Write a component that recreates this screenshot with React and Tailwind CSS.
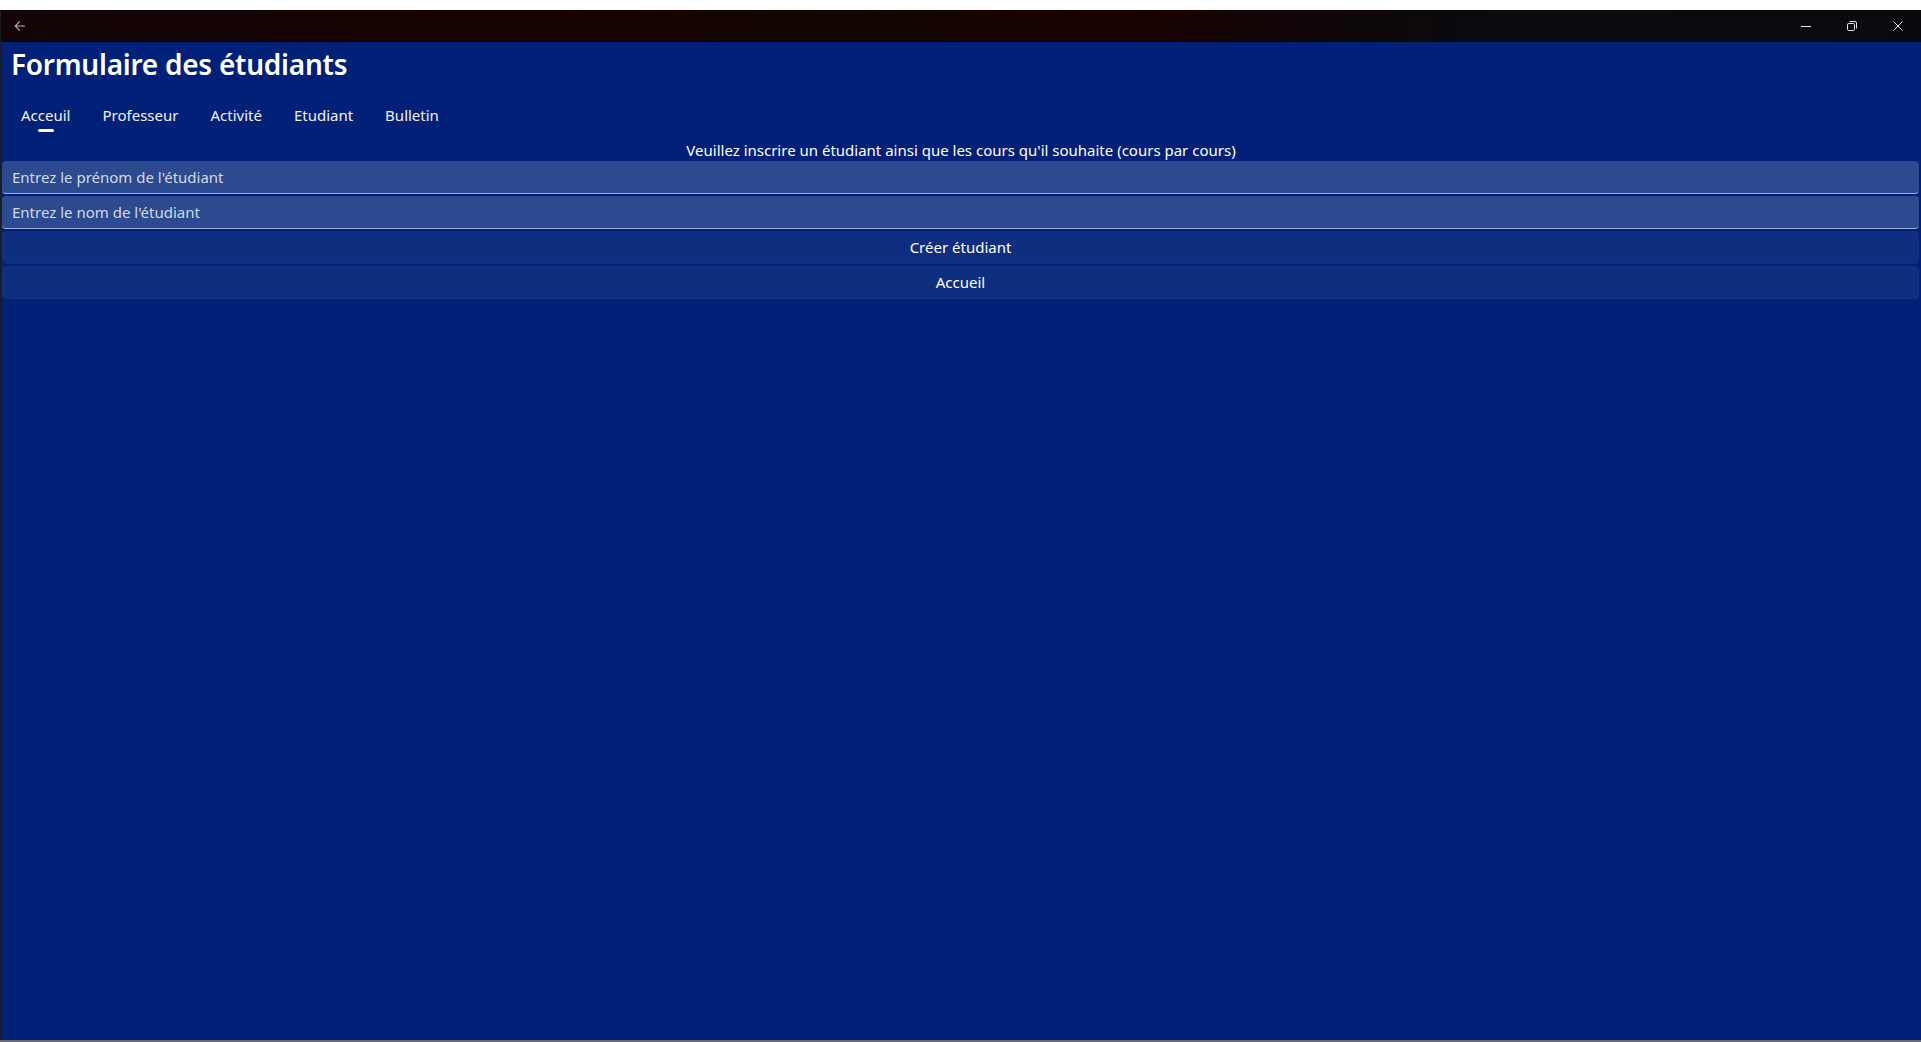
import React from "react";

const font = { fontFamily: '"Noto Sans", "Open Sans", sans-serif' };

function TitleBar() {
  return (
    <div className="h-[32px] flex items-center justify-between bg-[linear-gradient(90deg,#130407_0%,#170300_30%,#120600_45%,#1a0200_58%,#100608_68%,#0a0a0f_78%,#0a0a0e_100%)]">
      <div className="w-[36px] flex justify-center pl-[2px]">
        <svg width="12" height="12" viewBox="0 0 12 12" fill="none" stroke="#b9b4b6" strokeWidth="1.1">
          <path d="M11 6H1.2M5.8 1.4L1.2 6l4.6 4.6" />
        </svg>
      </div>
      <div className="flex items-center h-full">
        <div className="w-[46px] h-full flex items-center justify-center">
          <svg width="12" height="12" viewBox="0 0 12 12" fill="none" stroke="#e6e6e6" strokeWidth="1">
            <path d="M1 6.5h10" />
          </svg>
        </div>
        <div className="w-[46px] h-full flex items-center justify-center">
          <svg width="12" height="12" viewBox="0 0 12 12" fill="none" stroke="#e6e6e6" strokeWidth="1">
            <rect x="1.5" y="3.5" width="7" height="7" rx="1.2" />
            <path d="M3.5 1.5h5.5a1.5 1.5 0 0 1 1.5 1.5v5.5" />
          </svg>
        </div>
        <div className="w-[46px] h-full flex items-center justify-center">
          <svg width="12" height="12" viewBox="0 0 12 12" fill="none" stroke="#e6e6e6" strokeWidth="1">
            <path d="M1.5 1.5l9 9M10.5 1.5l-9 9" />
          </svg>
        </div>
      </div>
    </div>
  );
}

const tabs = ["Acceuil", "Professeur", "Activité", "Etudiant", "Bulletin"];

export default function App() {
  return (
    <div className="w-full h-[1042px] flex flex-col bg-white overflow-hidden" style={font}>
      <div className="h-[10px] bg-white" />
      <div className="flex-1 flex flex-col border-l border-[#1b1b22]">
        <TitleBar />
        <div className="flex-1 flex flex-col bg-[#012077] text-white">
          <h1 className="pl-[10px] pt-[4px] h-[50px] text-[28px] leading-[36px] font-semibold tracking-[-0.25px]">
            Formulaire des étudiants
          </h1>
          <div className="flex pl-[20px] gap-[32px] h-[48px] text-[15px]">
            {tabs.map((t, i) => (
              <div key={t} className="relative flex flex-col items-center pt-[13px]">
                <span className="leading-[20px] text-[#f0f2f8]">{t}</span>
                {i === 0 && (
                  <span className="mt-[4px] w-[16px] h-[3px] rounded-full bg-white" />
                )}
              </div>
            ))}
          </div>
          <div className="text-center text-[15px] leading-[21px] h-[21px] text-white">
            Veuillez inscrire un étudiant ainsi que les cours qu'il souhaite (cours par cours)
          </div>
          <div className="flex flex-col gap-[2px] pl-[1px] pr-[2px]">
            <div className="h-[33px] rounded-[4px] bg-[#2b4a90] border-b border-[#9fb0d6] flex items-center pl-[10px] pt-[1px] text-[15px] text-[#d3d9e8]">
              Entrez le prénom de l'étudiant
            </div>
            <div className="h-[33px] rounded-[4px] bg-[#2b4a90] border-b border-[#9fb0d6] flex items-center pl-[10px] pt-[1px] text-[15px] text-[#d3d9e8]">
              Entrez le nom de l'étudiant
            </div>
            <div className="h-[33px] rounded-[4px] bg-[#0f2e80] border border-[#13307f] flex items-center justify-center text-[15px] text-white">
              Créer étudiant
            </div>
            <div className="h-[33px] rounded-[4px] bg-[#0f2e80] border border-[#13307f] flex items-center justify-center text-[15px] text-white">
              Accueil
            </div>
          </div>
        </div>
      </div>
      <div className="h-[2px] bg-[#6b6b6b]" />
    </div>
  );
}
